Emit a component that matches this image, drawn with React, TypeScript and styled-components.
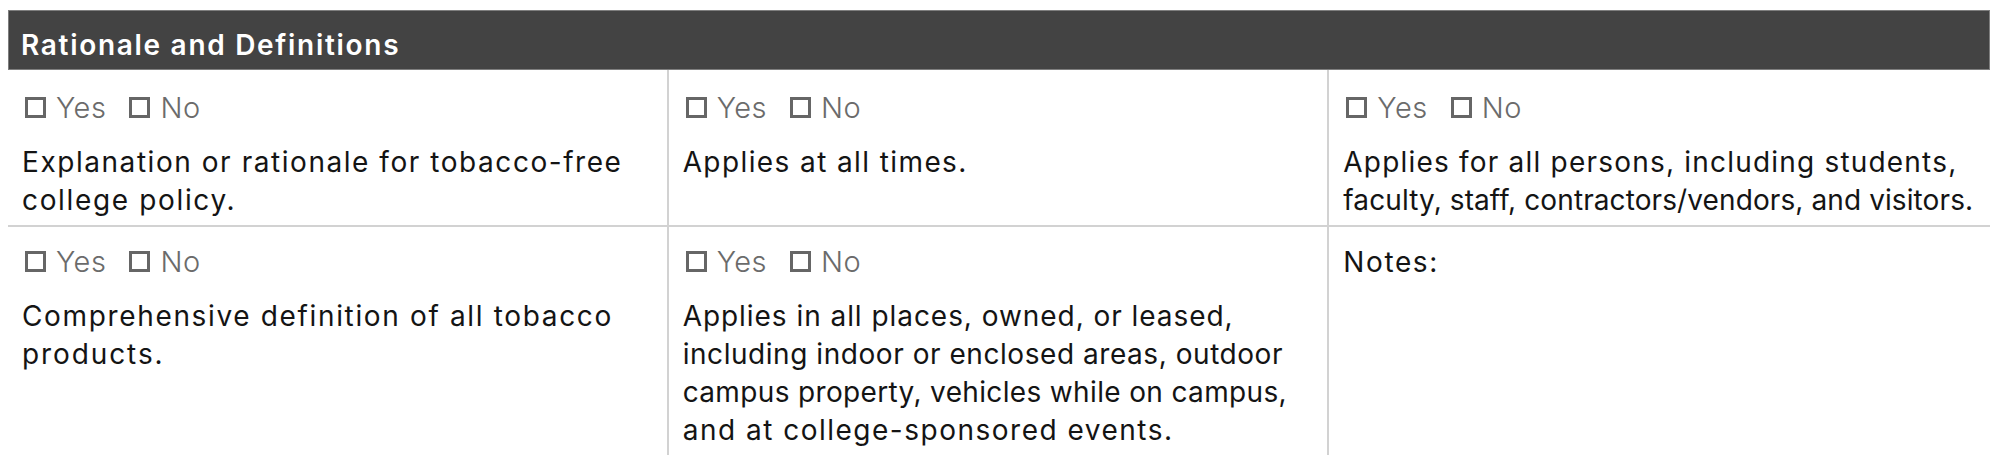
import React from 'react';
import styled, { createGlobalStyle } from 'styled-components';

const GlobalStyle = createGlobalStyle`
  body {
    margin: 0;
    background: #ffffff;
    font-family: Inter, "Open Sans", "Liberation Sans", sans-serif;
  }
`;

const Page = styled.div`
  padding: 10px 10px 0 8px;
`;

const Table = styled.section`
  width: 100%;
`;

const HeaderBar = styled.div`
  background: #434343;
  border: 1px solid #7e7e7e;
  height: 58px;
  box-sizing: content-box;
  padding: 0 12px;
  display: flex;
  align-items: flex-start;
`;

const Title = styled.h2`
  margin: 18px 0 0;
  color: #ffffff;
  font-size: 28px;
  font-weight: 600;
  line-height: 1.2;
  letter-spacing: 1.7px;
`;

const Grid = styled.div`
  display: grid;
  grid-template-columns: repeat(3, minmax(0, 1fr));
`;

const Cell = styled.div<{ $last: boolean; $top: boolean }>`
  padding: ${(p) => (p.$top ? '19px 8px 6px 14px' : '16px 8px 6px 14px')};
  border-right: ${(p) => (p.$last ? 'none' : '2px solid #d2d2d2')};
  border-bottom: ${(p) => (p.$top ? '2px solid #d2d2d2' : 'none')};
`;

const CheckRow = styled.div`
  display: flex;
  align-items: center;
  color: #6b6b6b;
  font-size: 29px;
  font-weight: 300;
  line-height: 37px;
  letter-spacing: 0.5px;
  margin-bottom: 17px;
`;

const Option = styled.span`
  display: inline-flex;
  align-items: center;
  gap: 10px;
  margin-right: 20px;
`;

const Box = styled.span`
  display: inline-block;
  width: 15px;
  height: 15px;
  border: 3px solid #666666;
  margin-left: 3px;
`;

const Text = styled.p`
  margin: 0;
  color: #141414;
  font-size: 28px;
  line-height: 38px;
`;

const Line = styled.span<{ $track: number }>`
  display: block;
  white-space: nowrap;
  letter-spacing: ${(p) => p.$track}px;
`;

type TextLine = { text: string; track: number };
type Item = { lines: TextLine[]; check: boolean };

const rows: Item[][] = [
  [
    {
      check: true,
      lines: [
        { text: 'Explanation or rationale for tobacco-free', track: 1.55 },
        { text: 'college policy.', track: 1.65 },
      ],
    },
    { check: true, lines: [{ text: 'Applies at all times.', track: 1.4 }] },
    {
      check: true,
      lines: [
        { text: 'Applies for all persons, including students,', track: 1.2 },
        { text: 'faculty, staff, contractors/vendors, and visitors.', track: 0.1 },
      ],
    },
  ],
  [
    {
      check: true,
      lines: [
        { text: 'Comprehensive definition of all tobacco', track: 1.65 },
        { text: 'products.', track: 1.9 },
      ],
    },
    {
      check: true,
      lines: [
        { text: 'Applies in all places, owned, or leased,', track: 0.95 },
        { text: 'including indoor or enclosed areas, outdoor', track: 0.55 },
        { text: 'campus property, vehicles while on campus,', track: 0.35 },
        { text: 'and at college-sponsored events.', track: 1.5 },
      ],
    },
    { check: false, lines: [{ text: 'Notes:', track: 1.6 }] },
  ],
];

const YesNo: React.FC = () => (
  <CheckRow>
    <Option>
      <Box />
      Yes
    </Option>
    <Option>
      <Box />
      No
    </Option>
  </CheckRow>
);

const App: React.FC = () => (
  <Page>
    <GlobalStyle />
    <Table>
      <HeaderBar>
        <Title>Rationale and Definitions</Title>
      </HeaderBar>
      <Grid>
        {rows.map((row, r) =>
          row.map((item, c) => (
            <Cell key={`${r}-${c}`} $last={c === 2} $top={r === 0}>
              {item.check && <YesNo />}
              <Text>
                {item.lines.map((line) => (
                  <Line key={line.text} $track={line.track}>
                    {line.text}
                  </Line>
                ))}
              </Text>
            </Cell>
          ))
        )}
      </Grid>
    </Table>
  </Page>
);

export default App;
